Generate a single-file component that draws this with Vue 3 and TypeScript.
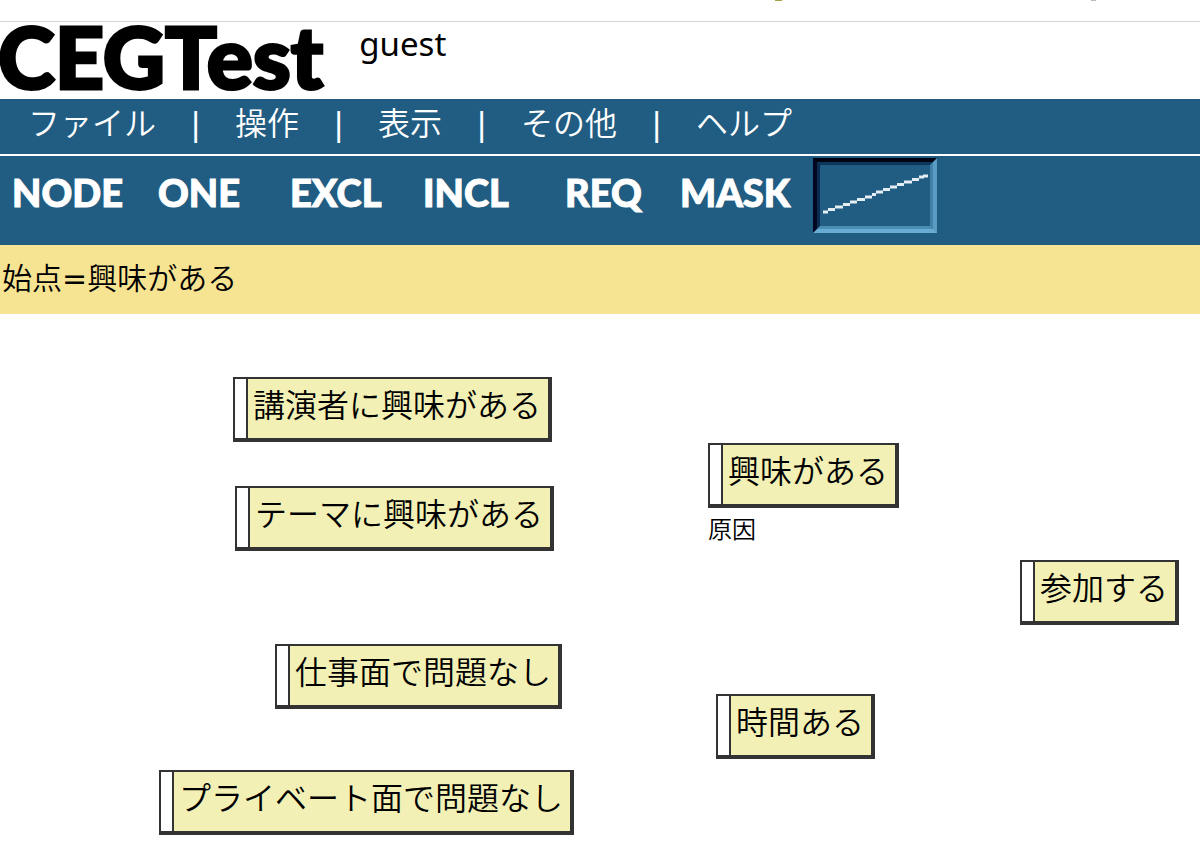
<script setup lang="ts">
interface CegNode {
  id: number
  label: string
  x: number
  y: number
  note?: string
}

const menus: string[] = ['ファイル', '操作', '表示', 'その他', 'ヘルプ']
const tools: string[] = ['NODE', 'ONE', 'EXCL', 'INCL', 'REQ', 'MASK']

const nodes: CegNode[] = [
  { id: 1, label: '講演者に興味がある', x: 233, y: 63 },
  { id: 2, label: 'テーマに興味がある', x: 235, y: 172 },
  { id: 3, label: '仕事面で問題なし', x: 275, y: 330 },
  { id: 4, label: 'プライベート面で問題なし', x: 159, y: 456 },
  { id: 5, label: '興味がある', x: 708, y: 129, note: '原因' },
  { id: 6, label: '参加する', x: 1020, y: 246 },
  { id: 7, label: '時間ある', x: 716, y: 380 },
]
</script>

<template>
  <div class="page">
    <div class="topline">
      <span class="speck olive"></span>
      <span class="speck grey"></span>
    </div>
    <header class="header">
      <h1 class="logo">CEGTest</h1>
      <span class="user">guest</span>
    </header>
    <nav class="menubar">
      <template v-for="(menu, i) in menus" :key="menu">
        <span v-if="i > 0" class="separator">|</span>
        <button type="button" class="menu">{{ menu }}</button>
      </template>
    </nav>
    <div class="toolbar">
      <button v-for="tool in tools" :key="tool" type="button" class="tool">{{ tool }}</button>
      <button type="button" class="line-tool" aria-label="LINE">
        <svg viewBox="0 0 110 61" width="110" height="61" aria-hidden="true">
          <path
            d="M3 47h5M8 44.500h7M15 42h8M23 39.500h7M30 37h7M37 34.500h8M45 32h7M52 29.500h4M56 27h7M63 24.500h7M70 22h7M77 19.500h7M84 17h8M92 14.500h7M99 12h5M103 11h5"
          />
        </svg>
      </button>
    </div>
    <div class="status">始点<span class="equals">=</span>興味がある</div>
    <main class="canvas">
      <div
        v-for="node in nodes"
        :key="node.id"
        class="node"
        :style="{ left: node.x + 'px', top: node.y + 'px' }"
      >
        <div class="box">
          <span class="handle"></span>
          <span class="label">{{ node.label }}</span>
        </div>
        <div v-if="node.note" class="note">{{ node.note }}</div>
      </div>
    </main>
  </div>
</template>

<style>
body {
  margin: 0;
  background: #fff;
}
</style>

<style scoped>
.page {
  display: flex;
  flex-direction: column;
  min-height: 100vh;
  overflow: hidden;
  color: #000;
  font-family: "DejaVu Sans", "Noto Sans CJK JP", sans-serif;
  font-size: 32px;
  font-weight: 350;
}
.topline {
  position: relative;
  height: 21px;
  border-bottom: 1px solid #d4d4d4;
}
.speck {
  position: absolute;
  top: 0;
  height: 1px;
}
.olive {
  left: 775px;
  width: 7px;
  background: #a9a04c;
}
.grey {
  left: 1091px;
  width: 5px;
  background: #bbb;
}
.header {
  display: flex;
  align-items: flex-start;
  gap: 36px;
  height: 77px;
}
.logo {
  margin: 0 0 0 -2px;
  font-family: Lato, sans-serif;
  font-size: 86px;
  font-weight: 900;
  line-height: 68px;
  -webkit-text-stroke: 3px #000;
}
.user {
  font-family: "Noto Sans", sans-serif;
  font-size: 33px;
  font-weight: 400;
  line-height: 44px;
}
.menubar {
  display: flex;
  gap: 31px;
  height: 55px;
  padding-left: 28px;
  background: #215d82;
  border-bottom: 2px solid #fff;
  color: #fff;
}
.menu {
  margin: 0;
  padding: 0 0 6px;
  border: 0;
  background: none;
  color: inherit;
  font: inherit;
  line-height: 48px;
}
.separator {
  width: 17px;
  font-weight: 400;
  line-height: 50px;
  text-align: center;
}
.toolbar {
  display: grid;
  grid-template-columns: 146px 132px 133px 142px 115px 133px 124px;
  align-items: start;
  height: 87px;
  padding: 2px 0 0 12px;
  background: #215d82;
}
.tool {
  margin: 0;
  padding: 0;
  border: 0;
  background: none;
  color: #fff;
  font-family: Lato, sans-serif;
  font-size: 38px;
  font-weight: 900;
  line-height: 68px;
  text-align: left;
  -webkit-text-stroke: 1px #fff;
}
.line-tool {
  display: flex;
  align-items: center;
  justify-content: center;
  height: 75px;
  padding: 0;
  border: 4px solid;
  border-color: #000412 #5a9cc4 #68abd3 #000720;
  background: #215d82;
}
.line-tool svg {
  border: 3px solid;
  border-color: #0c365a #4183aa #4b8eb5 #092a51;
}
.line-tool path {
  fill: none;
  stroke: #e4eef3;
  stroke-width: 3;
}
.status {
  height: 69px;
  padding-left: 2px;
  background: #f7e492;
  font-size: 30px;
  line-height: 68px;
}
.equals {
  font-weight: 400;
}
.canvas {
  position: relative;
  flex: 1;
  min-height: 541px;
}
.node {
  position: absolute;
  white-space: nowrap;
}
.box {
  display: flex;
  width: max-content;
  height: 59px;
  border: solid #333;
  border-width: 2px 4px 4px 2px;
  background: #f2f0b5;
}
.handle {
  width: 11px;
  border-right: 2px solid #333;
  background: #fff;
}
.label {
  padding: 0 7px 0 5px;
  line-height: 54px;
}
.note {
  font-size: 24px;
  line-height: 44px;
}
</style>
